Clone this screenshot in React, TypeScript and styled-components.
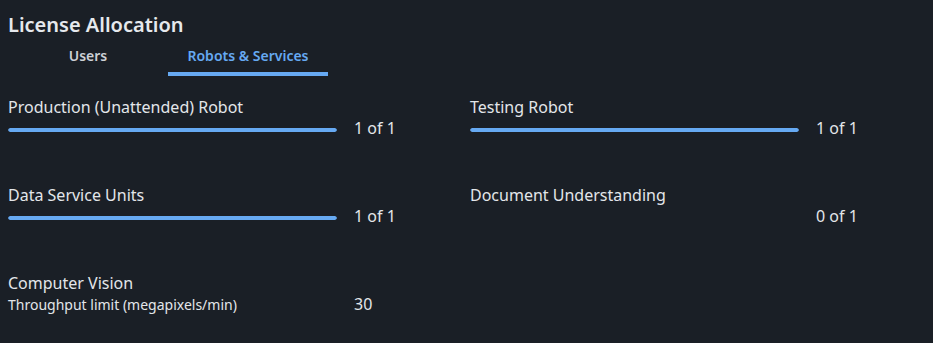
import React from 'react';
import styled, { createGlobalStyle } from 'styled-components';

const GlobalStyle = createGlobalStyle`
  html, body {
    margin: 0;
    padding: 0;
    background: #1a1f26;
  }
  body {
    font-family: 'Noto Sans', 'Open Sans', sans-serif;
    color: #e3e6ea;
  }
`;

const Page = styled.div`
  width: 933px;
  height: 343px;
  box-sizing: border-box;
  padding: 11px 8px 0 8px;
  background: #1a1f26;
  overflow: hidden;
`;

const Title = styled.h2`
  margin: 0;
  font-size: 20px;
  line-height: 28px;
  font-weight: 600;
  color: #e6e9ed;
`;

const Tabs = styled.div`
  display: flex;
  margin-top: -1px;
`;

const Tab = styled.div<{ $active?: boolean }>`
  width: 160px;
  height: 38px;
  box-sizing: border-box;
  display: flex;
  align-items: center;
  justify-content: center;
  font-size: 14px;
  font-weight: 600;
  color: ${p => (p.$active ? '#66a9f2' : '#cdd1d6')};
  border-bottom: 4px solid ${p => (p.$active ? '#66a9f2' : 'transparent')};
  cursor: pointer;
`;

const Grid = styled.div`
  display: grid;
  grid-template-columns: 462px 462px;
  margin-top: 20px;
`;

const Cell = styled.div`
  height: 88px;
`;

const Label = styled.div`
  font-size: 16px;
  line-height: 22px;
  color: #e3e6ea;
`;

const MeterRow = styled.div`
  display: flex;
  align-items: center;
  height: 20px;
`;

const Track = styled.div`
  width: 329px;
  height: 4px;
  margin-top: 4px;
  border-radius: 2px;
  overflow: hidden;
`;

const Fill = styled.div`
  height: 100%;
  border-radius: 2px;
  background: #66a9f2;
`;

const Value = styled.div`
  margin-left: 17px;
  font-size: 16px;
  color: #e3e6ea;
`;

const SubRow = styled.div`
  display: flex;
  align-items: center;
  height: 20px;
`;

const SubLabel = styled.div`
  width: 346px;
  font-size: 14px;
  color: #e3e6ea;
`;

const SubValue = styled.div`
  font-size: 16px;
  color: #e3e6ea;
`;

type Allocation = { name: string; used: number; total: number };

const allocations: Allocation[] = [
  { name: 'Production (Unattended) Robot', used: 1, total: 1 },
  { name: 'Testing Robot', used: 1, total: 1 },
  { name: 'Data Service Units', used: 1, total: 1 },
  { name: 'Document Understanding', used: 0, total: 1 },
];

export default function App() {
  return (
    <Page>
      <GlobalStyle />
      <Title>License Allocation</Title>
      <Tabs>
        <Tab>Users</Tab>
        <Tab $active>Robots &amp; Services</Tab>
      </Tabs>
      <Grid>
        {allocations.map(a => (
          <Cell key={a.name}>
            <Label>{a.name}</Label>
            <MeterRow>
              <Track>
                <Fill style={{ width: `${(a.used / a.total) * 100}%` }} />
              </Track>
              <Value>
                {a.used} of {a.total}
              </Value>
            </MeterRow>
          </Cell>
        ))}
        <Cell>
          <Label>Computer Vision</Label>
          <SubRow>
            <SubLabel>Throughput limit (megapixels/min)</SubLabel>
            <SubValue>30</SubValue>
          </SubRow>
        </Cell>
      </Grid>
    </Page>
  );
}
